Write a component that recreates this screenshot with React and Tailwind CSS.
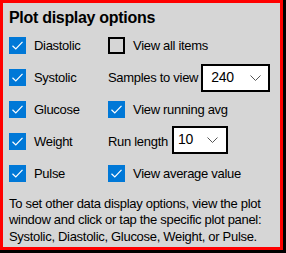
import React from "react";

function Check({ on }) {
  if (!on) {
    return <div className="w-[17px] h-[17px] border-2 border-black shrink-0" />;
  }
  return (
    <div className="w-[17px] h-[17px] bg-[#0078d7] shrink-0 flex items-center justify-center">
      <svg width="13" height="13" viewBox="0 0 13 13" fill="none">
        <path d="M1.5 6.8 L4.8 10 L11.5 2.8" stroke="white" strokeWidth="1.2" />
      </svg>
    </div>
  );
}

function Drop({ value, w, pl, pr }) {
  return (
    <div className={`${w} ${pl} ${pr} h-[28px] border-2 border-black bg-white flex items-center justify-between text-[14px]`}>
      <span>{value}</span>
      <svg width="11" height="6" viewBox="0 0 11 6" fill="none">
        <path d="M0.5 0.5 L5.5 5.5 L10.5 0.5" stroke="#555" strokeWidth="1" />
      </svg>
    </div>
  );
}

function Item({ on, label }) {
  return (
    <div className="flex items-center gap-[8px]">
      <Check on={on} />
      <span>{label}</span>
    </div>
  );
}

export default function App() {
  return (
    <div className="w-[286px] h-[253px] bg-black" style={{ fontFamily: '"Liberation Sans", Arial, sans-serif' }}>
      <div className="w-[283px] h-[250px] border-[3px] border-[#ff0000] bg-[#d6d6d6] pt-[4px] pl-[6px] text-[13px] tracking-[-0.3px] text-black">
        <h2 className="text-[16px] font-bold leading-[21px]">Plot display options</h2>
        <div className="grid grid-cols-[99px_1fr] auto-rows-[32px] items-center mt-[1.5px]">
          <Item on label="Diastolic" />
          <Item on={false} label="View all items" />
          <Item on label="Systolic" />
          <div className="flex items-center gap-[3px]">
            <span>Samples to view</span>
            <Drop value="240" w="w-[69px]" pl="pl-[8px]" pr="pr-[7px]" />
          </div>
          <Item on label="Glucose" />
          <Item on label="View running avg" />
          <Item on label="Weight" />
          <div className="flex items-center gap-[4px] -mt-[4px]">
            <span className="mt-[4px]">Run length</span>
            <Drop value="10" w="w-[56px]" pl="pl-[4px]" pr="pr-[8px]" />
          </div>
          <Item on label="Pulse" />
          <Item on label="View average value" />
        </div>
        <p className="leading-[16.5px] mt-[6px] whitespace-nowrap">
          To set other data display options, view the plot
          <br />
          window and click or tap the specific plot panel:
          <br />
          Systolic, Diastolic, Glucose, Weight, or Pulse.
        </p>
      </div>
    </div>
  );
}
